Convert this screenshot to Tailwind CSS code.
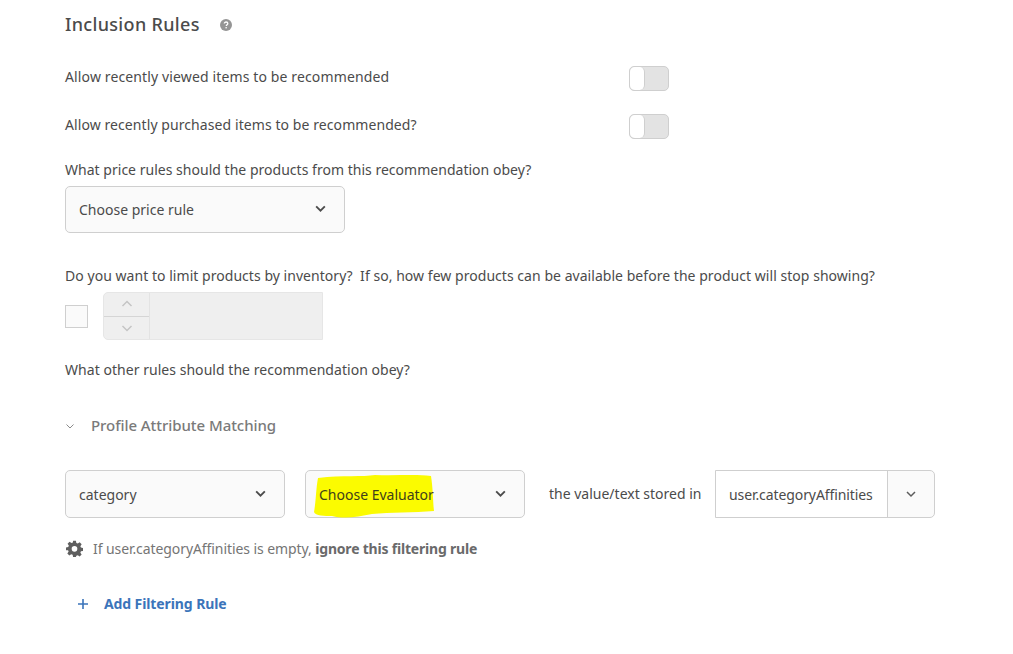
<!DOCTYPE html>
<html lang="en">
<head>
    <meta charset="UTF-8">
    <title>Inclusion Rules</title>
    <script src="https://cdn.jsdelivr.net/npm/@tailwindcss/browser@4"></script>
</head>
<body class="bg-white h-[654px] overflow-hidden font-['Noto_Sans',sans-serif] text-[14px] text-[#4b4b4b]">
    <div class="pl-[65px] flex flex-col items-start">

        <!-- Heading -->
        <div class="flex items-center h-[24px] mt-[12px]">
            <h2 class="w-[135px] text-[18px] leading-[24px] font-medium whitespace-nowrap tracking-[0.33px] text-[#4b4b4b]">Inclusion Rules</h2>
            <svg class="ml-[20px] mt-[2px] w-[12px] h-[12px]" viewBox="0 0 12 12">
                <circle cx="6" cy="6" r="6" fill="#959595"/>
                <path d="M4.3 4.6c0-1 .8-1.6 1.8-1.6s1.7.6 1.7 1.5c0 1.300-1.500 1.300-1.500 2.500" fill="none" stroke="#fff" stroke-width="1.300"/>
                <rect x="5.500" y="8" width="1.300" height="1.400" fill="#fff"/>
            </svg>
        </div>

        <!-- Toggles -->
        <div class="flex items-center w-[604px] justify-between h-[26px] mt-[29px]">
            <span class="pb-[4px] tracking-[0.13px]">Allow recently viewed items to be recommended</span>
            <div class="w-[40px] h-[25px] rounded-[5px] border border-[#cfcfcf] bg-[#e3e3e3]">
                <div class="w-[15px] h-full rounded-[5px] bg-white border-r border-[#cfcfcf]"></div>
            </div>
        </div>
        <div class="flex items-center w-[604px] justify-between h-[26px] mt-[22px]">
            <span class="pb-[4px] tracking-[0.08px]">Allow recently purchased items to be recommended?</span>
            <div class="w-[40px] h-[25px] rounded-[5px] border border-[#cfcfcf] bg-[#e3e3e3]">
                <div class="w-[15px] h-full rounded-[5px] bg-white border-r border-[#cfcfcf]"></div>
            </div>
        </div>

        <!-- Price rule -->
        <p class="leading-[20px] mt-[21px] tracking-[0.02px]">What price rules should the products from this recommendation obey?</p>
        <div class="flex items-center justify-between w-[280px] h-[47px] mt-[6px] pl-[13px] pr-[17px] rounded-[5px] border border-[#cfcfcf] bg-[#fafafa]">
            <span>Choose price rule</span>
            <svg class="w-[13px] h-[13px] mb-[2px]" viewBox="0 0 12 12"><path d="M2 4l4 4 4-4" fill="none" stroke="#4b4b4b" stroke-width="1.700"/></svg>
        </div>

        <!-- Inventory -->
        <p class="leading-[20px] mt-[33px] tracking-[0.04px]">Do you want to limit products by inventory?&nbsp; If so, how few products can be available before the product will stop showing?</p>
        <div class="flex items-center mt-[6px]">
            <div class="w-[23px] h-[23px] border border-[#cfcfcf] bg-[#fafafa]"></div>
            <div class="flex w-[220px] h-[48px] ml-[15px] rounded-l-[5px] border border-[#e6e6e6] bg-[#efefef]">
                <div class="flex flex-col w-[46px] border-r border-[#e3e3e3]">
                    <div class="flex-1 flex items-center justify-center border-b border-[#d5d5d5]">
                        <svg class="w-[12px] h-[12px]" viewBox="0 0 12 12"><path d="M1.500 8L6 3.500 10.500 8" fill="none" stroke="#c4c4c4" stroke-width="1.500"/></svg>
                    </div>
                    <div class="flex-1 flex items-center justify-center">
                        <svg class="w-[12px] h-[12px]" viewBox="0 0 12 12"><path d="M1.500 4L6 8.500 10.500 4" fill="none" stroke="#c4c4c4" stroke-width="1.500"/></svg>
                    </div>
                </div>
            </div>
        </div>

        <p class="leading-[20px] mt-[20px] tracking-[0.04px]">What other rules should the recommendation obey?</p>

        <!-- Accordion -->
        <div class="flex items-center h-[24px] mt-[33px]">
            <svg class="w-[10px] h-[10px] mt-[2px]" viewBox="0 0 10 10"><path d="M1.500 3.500L5 7l3.500-3.500" fill="none" stroke="#8a8a8a" stroke-width="1"/></svg>
            <span class="ml-[16px] text-[15px] font-medium tracking-[-0.06px] text-[#7a7a7a]">Profile Attribute Matching</span>
        </div>

        <!-- Filter row -->
        <div class="flex items-center mt-[33px]">
            <div class="flex items-center justify-between w-[220px] h-[48px] pl-[13px] pr-[17px] rounded-[5px] border border-[#cfcfcf] bg-[#fafafa]">
                <span>category</span>
                <svg class="w-[13px] h-[13px] mb-[2px]" viewBox="0 0 12 12"><path d="M2 4l4 4 4-4" fill="none" stroke="#4b4b4b" stroke-width="1.700"/></svg>
            </div>
            <div class="relative flex items-center justify-between w-[220px] h-[48px] ml-[20px] pl-[13px] pr-[17px] rounded-[5px] border border-[#cfcfcf] bg-[#fafafa]">
                <svg class="absolute left-[7px] top-[3px] w-[123px] h-[46px]" viewBox="0 0 123 46"><path d="M5 4C30 1 50 3 62 1c20 1 40-1 56 1 2 12 2 26 3 35-20 2-44 1-62 3-14 3-28 5-40 2C12 42 2 42 1 38 3 28 3 14 5 4z" fill="#fbfb00"/></svg>
                <span class="relative text-[#3f3f1a]">Choose Evaluator</span>
                <svg class="relative w-[13px] h-[13px] mb-[2px]" viewBox="0 0 12 12"><path d="M2 4l4 4 4-4" fill="none" stroke="#4b4b4b" stroke-width="1.700"/></svg>
            </div>
            <span class="ml-[24px] w-[166px] pb-[2px] whitespace-nowrap">the value/text stored in</span>
            <div class="flex w-[220px] h-[48px] rounded-r-[5px] border border-[#cfcfcf] bg-[#fafafa]">
                <div class="flex items-center w-[172px] pl-[13px] bg-white border-r border-[#cfcfcf] tracking-[-0.09px]">user.categoryAffinities</div>
                <div class="flex-1 flex items-center justify-center">
                    <svg class="w-[12px] h-[12px]" viewBox="0 0 12 12"><path d="M2 4l4 4 4-4" fill="none" stroke="#5c5c5c" stroke-width="1.500"/></svg>
                </div>
            </div>
        </div>

        <!-- Gear note -->
        <div class="flex items-center h-[22px] mt-[19px] text-[#757575]">
            <svg class="w-[17px] h-[17px] ml-[1px]" viewBox="0 0 24 24"><path fill="#5f5f5f" fill-rule="evenodd" d="M10 1h4l.6 3.200 2 .8 2.700-1.800 2.800 2.800-1.800 2.700.8 2 3.200.6v4l-3.200.6-.8 2 1.800 2.700-2.800 2.800-2.700-1.800-2 .8L14 24h-4l-.6-3.200-2-.8-2.700 1.800-2.800-2.800 1.800-2.700-.8-2L0 14.500v-4l3.200-.6.8-2L2.200 5.200 5 2.400l2.700 1.800 2-.8zM12 8.500a4 4 0 100 8 4 4 0 000-8z"/></svg>
            <span class="ml-[10px] tracking-[-0.08px]">If user.categoryAffinities is empty, <b class="font-bold tracking-[-0.2px] text-[#6a6a6a]">ignore this filtering rule</b></span>
        </div>

        <!-- Add rule -->
        <div class="flex items-center h-[24px] mt-[32px] ml-[13px] text-[#3b74ba]">
            <svg class="w-[10px] h-[10px] mt-[2px]" viewBox="0 0 10 10"><path d="M5 0v10M0 5h10" stroke="#3b74ba" stroke-width="1.600"/></svg>
            <span class="ml-[16px] text-[14px] font-bold tracking-[-0.1px]">Add Filtering Rule</span>
        </div>
    </div>
</body>
</html>
